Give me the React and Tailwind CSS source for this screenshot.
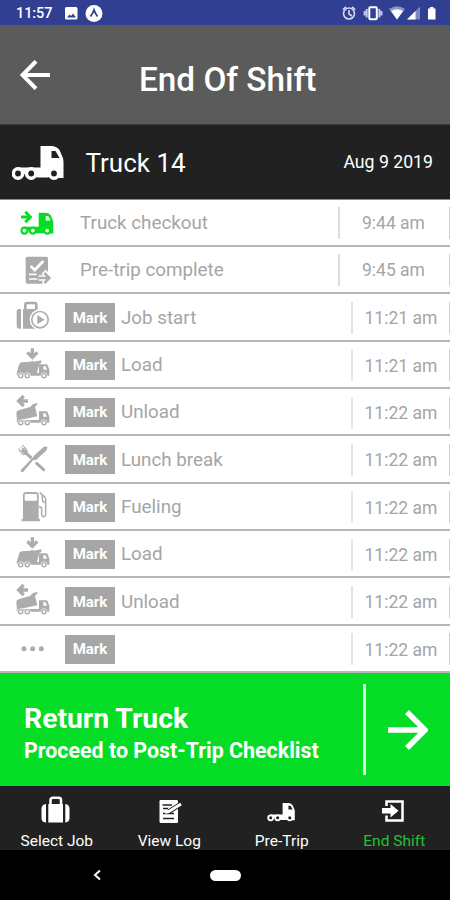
const Truck = ({ hole = '#212121' }) => (
  <g>
    <path fill="currentColor" d="M5 21.500H28.500V0H40Q45 .5 47.500 4L50.500 11Q51.500 13 51.500 16V32H47L42 27L36 31.500H25L20 28H6Q0 28 5 21.500Z" />
    <path fill={hole} d="M39.500 5H43.500L47.500 12H39.500Z" />
    {[6, 19.2, 42].map((x) => (
      <g key={x}>
        <circle cx={x} cy="27.500" r="6.400" fill="currentColor" />
        <circle cx={x} cy="27.500" r="2.900" fill={hole} />
      </g>
    ))}
  </g>
);

// Wheels and cab shared by the load and unload trucks
const DumpBase = () => (
  <g>
    <path fill="currentColor" d="M50 96H117V70H139Q142 70 143 73L148 86V104H52Q50 104 50 96Z" />
    <path fill="#fff" d="M130 76H137L141 86H130Z" />
    {[62, 82, 132].map((x) => (
      <g key={x}>
        <circle cx={x} cy="104" r="9.700" fill="#fff" />
        <circle cx={x} cy="104" r="8.200" fill="currentColor" />
        <circle cx={x} cy="104" r="4" fill="#fff" />
      </g>
    ))}
  </g>
);

const rowIcons = {
  checkout: (
    <g className="text-[#05dc25]">
      <path fill="none" stroke="currentColor" strokeWidth="9" d="M63 54H89M76 38L91 54L76 70" />
      <g transform="translate(62 41) scale(1.9 1.95)"><Truck hole="#fff" /></g>
    </g>
  ),
  pretrip: (
    <g>
      <rect x="77" y="32" width="67" height="81" rx="5" fill="currentColor" />
      <path fill="none" stroke="#fff" strokeWidth="8" d="M92 60L104 72L130 45" />
      <path fill="none" stroke="#fff" strokeWidth="5" d="M87 85H110M87 99H112" />
      <path fill="none" stroke="#fff" strokeWidth="17" d="M116 96H145M131 77L150 96L131 115" />
      <path fill="none" stroke="currentColor" strokeWidth="8" d="M116 96H146M133 81L148 96L133 111" />
    </g>
  ),
  job: (
    <g>
      <path fill="currentColor" d="M63 48V107H57Q50 107 50 100V56Q50 48 57 48ZM69 48H113V107H69Z" />
      <path fill="none" stroke="currentColor" strokeWidth="8" d="M76 48V35Q76 30 81 30H104Q109 30 109 35V48" />
      <circle cx="120" cy="80" r="31" fill="#fff" />
      <circle cx="120" cy="80" r="24.500" fill="#fff" stroke="currentColor" strokeWidth="5" />
      <path fill="currentColor" d="M112 66V94L134 80Z" />
    </g>
  ),
  load: (
    <g>
      <path fill="none" stroke="currentColor" strokeWidth="10" d="M97 22V48M82 34L97 49L112 34" />
      <path fill="currentColor" d="M50 96L58 69Q60 64 66 64L91 62Q97 58 102 62L124 58V66L118 68L111 96Z" />
      <DumpBase />
    </g>
  ),
  unload: (
    <g>
      <path fill="none" stroke="currentColor" strokeWidth="10" d="M56 39H84M71 24L56 39L71 54" />
      <path fill="currentColor" d="M51 97L49 76Q49 69 56 67L90 57L99 48L112 45V50L105 56L112 85L60 96Z" />
      <DumpBase />
    </g>
  ),
  lunch: (
    <g fill="none" stroke="currentColor" strokeLinecap="round">
      <path strokeWidth="3" d="M57 42L69 54M62 36L75 49M68 31L80 43M57 42Q65 65 78 57Q88 49 68 31" />
      <path fill="currentColor" strokeWidth="2" d="M64 47L71 39L83 50Q82 60 73 57Z" />
      <path strokeWidth="9" d="M79 55L92 67M110 85L131 104" />
      <path fill="currentColor" stroke="none" d="M62 106L94 72Q111 51 131 36Q136 33 142 35Q143 43 137 49L107 76L100 75L70 110Q63 114 62 106Z" />
    </g>
  ),
  fuel: (
    <g>
      <path fill="currentColor" d="M69 107V36Q69 27 78 27H107Q116 27 116 36V107L120 109V115H65V109Z" />
      <rect x="74" y="33" width="37" height="20" rx="3" fill="#fff" />
      <path fill="none" stroke="currentColor" strokeWidth="4.500" d="M119 28L134 42Q138 46 137 53V88Q138 100 131 101Q124 101 125 91V78Q125 71 117 71M127 37V50Q128 58 137 59" />
    </g>
  ),
  more: (
    <g fill="currentColor">
      <circle cx="72" cy="71" r="7.500" />
      <circle cx="98" cy="71" r="7.500" />
      <circle cx="124" cy="71" r="7.500" />
    </g>
  ),
};

const events = [
  { icon: 'checkout', label: 'Truck checkout', time: '9:44 am' },
  { icon: 'pretrip', label: 'Pre-trip complete', time: '9:45 am' },
  { icon: 'job', label: 'Job start', time: '11:21 am', mark: true },
  { icon: 'load', label: 'Load', time: '11:21 am', mark: true },
  { icon: 'unload', label: 'Unload', time: '11:22 am', mark: true },
  { icon: 'lunch', label: 'Lunch break', time: '11:22 am', mark: true },
  { icon: 'fuel', label: 'Fueling', time: '11:22 am', mark: true },
  { icon: 'load', label: 'Load', time: '11:22 am', mark: true },
  { icon: 'unload', label: 'Unload', time: '11:22 am', mark: true },
  { icon: 'more', label: '', time: '11:22 am', mark: true },
];

const StatusBar = () => (
  <div className="flex h-[25px] shrink-0 items-center bg-[#303f92] pl-4 text-white">
    <span className="w-[48px] pt-[4px] text-[14.5px] leading-none font-medium tracking-[-0.1px]">11:57</span>
    <svg className="h-[25px] w-[40px]" viewBox="0 0 40 25">
      <path fill="currentColor" fillRule="evenodd" d="M2.500 7H12Q13.500 7 13.500 8.500V18Q13.500 19.500 12 19.500H2.500Q1 19.500 1 18V8.500Q1 7 2.500 7ZM3 17.500H12L9 13.500L7 16L5.500 14.500Z" />
      <circle cx="30" cy="13.500" r="8.500" fill="currentColor" />
      <path fill="none" stroke="#303f92" strokeWidth="1.800" d="M26.500 16.500Q29 13 30 10Q31 13 33.500 16.500" />
    </svg>
    <svg className="ml-auto h-[25px] w-[110px]" viewBox="340 0 110 25">
      <g fill="none" stroke="#d5d9ee" strokeWidth="1.600">
        <circle cx="349" cy="13.500" r="5.500" />
        <path d="M349 10V14L352 16M342.800 9.500L346 6.800M355.200 9.500L352 6.800" />
      </g>
      <rect x="369.300" y="7.300" width="7.500" height="12" rx="1" fill="none" stroke="#fff" strokeWidth="2" />
      <path fill="none" stroke="#c3c9e6" strokeWidth="2" d="M366.700 9V17.500M379.400 9V17.500M364.600 11V15.500M381.500 11V15.500" />
      <path fill="#8c95c8" d="M389 9Q397 3.500 405 9L397 19.500Z" />
      <path fill="#fff" d="M391 11Q397 7.500 403 11L397 19.500Z" />
      <path fill="#8089bf" d="M420 6.500V19.500H407Z" />
      <path fill="#fff" d="M415.500 11V19.500H407Z" />
      <path fill="#fff" d="M430 7H433.500V8.500H435.500V19.500H428V8.500H430Z" />
    </svg>
  </div>
);

const EventRow = ({ icon, label, time, mark }) => (
  <div className="flex h-[47.35px] items-center border-b-2 border-[#b7b7b7] bg-white text-[18.8px] text-[#a5a5a5]">
    <svg className="h-[47px] w-[65px] shrink-0 text-[#acacac]" viewBox="0 0 195 141">{rowIcons[icon]}</svg>
    {mark && (
      <span className="mt-[2px] flex h-[29px] w-[50px] shrink-0 items-center justify-center bg-[#a6a6a6] text-[15px] font-bold text-white">
        Mark
      </span>
    )}
    <span className={mark ? 'pt-[2px] pl-[6px]' : 'pt-[2px] pl-[15px]'}>{label}</span>
    <div
      className={
        mark
          ? 'mt-[2px] ml-auto flex h-8 w-[99px] items-center border-l-2 border-[#e4e4e4] pl-[11.5px] text-[17.500px] whitespace-nowrap'
          : 'mt-px ml-auto flex h-8 w-[112px] items-center border-l-2 border-[#dcdcdc] pl-[22px] text-[17.500px] whitespace-nowrap'
      }
    >
      <span className="flex-1 pt-px">{time}</span>
      <div className="h-8 w-px bg-[#cfcfcf]"></div>
    </div>
  </div>
);

const tabs = [
  {
    label: 'Select Job',
    icon: (
      <g fill="currentColor">
        <path d="M20 11V29.500H19.500Q15.500 29 15.500 25V16Q15.500 11.500 20 11ZM22.300 11H37V29.500H22.300ZM39.300 11Q43.500 11.500 43.500 16V25Q43.500 29 39.300 29.500Z" />
        <path fill="none" stroke="currentColor" strokeWidth="2.500" d="M24.500 12V7Q24.500 4.800 27 4.800H32.500Q35 4.800 35 7V12" />
      </g>
    ),
  },
  {
    label: 'View Log',
    icon: (
      <g>
        <rect x="20.500" y="7" width="18.500" height="23" rx="1.200" fill="currentColor" />
        <path fill="none" stroke="#212121" strokeWidth="1.400" d="M23.500 12H33M24 15.500H29M24 20.500H35M24 25.500H35" />
        <path stroke="#212121" strokeWidth="5" d="M30 18.500L42 11" />
        <path stroke="currentColor" strokeWidth="3" d="M29 19L42 11" />
        <path fill="currentColor" d="M26 21L28 17L30 20Z" />
      </g>
    ),
  },
  { label: 'Pre-Trip', icon: <g transform="translate(16.500 10) scale(.53 .54)"><Truck /></g> },
  {
    label: 'End Shift',
    active: true,
    icon: (
      <g className="text-white">
        <path fill="none" stroke="currentColor" strokeWidth="2.500" d="M22.500 13V8.500H38.500V27.500H22.500V22.500" />
        <path fill="currentColor" d="M18 15H26.500V11L34.500 17.800L26.500 24.500V20.500H18Z" />
      </g>
    ),
  },
];

const App = () => {
  return (
    <div className="flex h-[900px] w-[450px] flex-col overflow-hidden bg-black font-['Roboto',sans-serif]">
      <StatusBar />

      <header className="flex h-[100px] shrink-0 items-center border-b border-[#3a3a3a] bg-[#5b5b5b] text-white">
        <svg className="ml-5 h-[30px] w-[30px]" viewBox="0 0 30 30">
          <path fill="none" stroke="currentColor" strokeWidth="4" d="M30 15H3M16 1.300L2.500 15L16 28.700" />
        </svg>
        <h1 className="ml-[89px] pt-[10px] text-[33.300px] leading-none font-medium whitespace-nowrap">End Of Shift</h1>
      </header>

      <div className="flex h-[74.500px] shrink-0 items-center border-b border-[#8a8a8a] bg-[#212121] text-white">
        <svg className="mt-[5px] ml-[11.500px] h-[36px] w-[53px]" viewBox="0 0 53 36"><Truck /></svg>
        <span className="mt-[3px] ml-[21px] text-[26px] whitespace-nowrap">Truck 14</span>
        <span className="mt-[2px] mr-[17px] ml-auto text-[17.700px] whitespace-nowrap">Aug 9 2019</span>
      </div>

      <div className="shrink-0">
        {events.map((e, i) => <EventRow key={i} {...e} />)}
      </div>

      <button className="flex h-[113px] shrink-0 items-center bg-[#05dc25] text-left text-white">
        <div className="flex-1 pt-[11px] pl-6">
          <p className="text-[28.300px] leading-8 font-bold">Return Truck</p>
          <p className="text-[21.400px] leading-8 font-bold whitespace-nowrap">Proceed to Post-Trip Checklist</p>
        </div>
        <div className="mr-[22px] h-[91px] w-[3px] bg-[#d5fadb]"></div>
        <svg className="mt-[2px] mr-[22px] h-10 w-10" viewBox="0 0 40 40">
          <path fill="none" stroke="currentColor" strokeWidth="5.500" d="M0 20H36M19 2L37 20L19 38" />
        </svg>
      </button>

      <nav className="grid h-[64px] shrink-0 grid-cols-4 bg-[#212121] text-white">
        {tabs.map((t) => (
          <div key={t.label} className="flex flex-col items-center pt-[7px]">
            <svg className="h-[36px] w-[60px]" viewBox="0 0 60 36">{t.icon}</svg>
            <span className={t.active ? 'pl-px text-[15.5px] leading-6 text-[#1fc334]' : 'pl-px text-[15.5px] leading-6'}>{t.label}</span>
          </div>
        ))}
      </nav>

      <div className="flex flex-1 items-center pt-px text-white">
        <svg className="ml-[93px] h-3 w-2" viewBox="0 0 8 12">
          <path fill="none" stroke="currentColor" strokeWidth="2" d="M7 1.500L2 6L7 10.500" />
        </svg>
        <div className="ml-[109px] h-[11px] w-[31px] rounded-full bg-white"></div>
      </div>
    </div>
  );
};

export default App;
